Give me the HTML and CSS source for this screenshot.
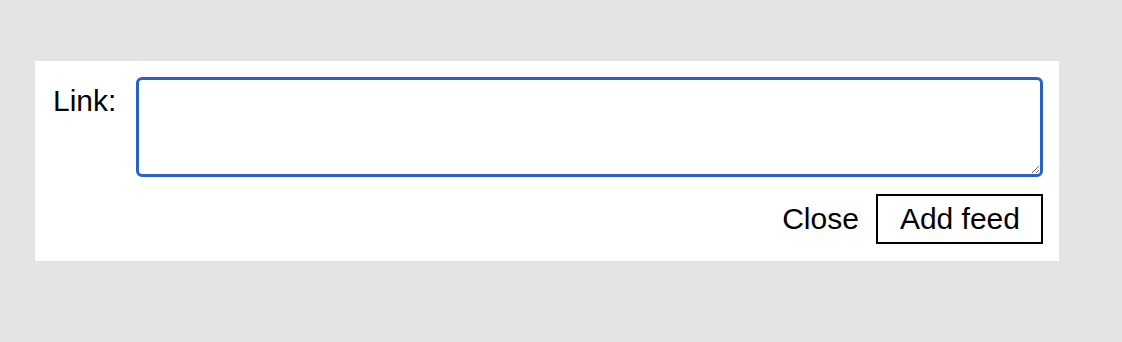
FILE: index.html
```html
<!DOCTYPE html>
<html lang="en">
<head>
    <meta charset="UTF-8">
    <title>Add feed</title>
    <link rel="stylesheet" href="styles.css">
</head>
<body>
    <div class="dialog">
        <div class="field">
            <label for="link">Link:</label>
            <textarea id="link" autofocus></textarea>
        </div>
        <div class="actions">
            <button class="close">Close</button>
            <button class="add">Add feed</button>
        </div>
    </div>
</body>
</html>
```

FILE: styles.css
```css
body {
    margin: 0;
    background: #e4e4e4;
    font-family: 'Liberation Sans', Arial, sans-serif;
    font-size: 30px;
    color: #000;
    padding: 61px 63px 0 35px;
}

.dialog {
    background: white;
    padding: 16px 16px 17px 18px;
}

.field {
    display: flex;
    align-items: flex-start;
    gap: 18px;
}

label {
    min-width: 65px;
    margin-top: 7px;
}

textarea {
    flex: 1;
    box-sizing: border-box;
    height: 100px;
    margin: 0;
    border: 3px solid #2a61c8;
    border-radius: 6px;
    outline: none;
    font-family: inherit;
    font-size: 20px;
    padding: 4px;
}

.actions {
    display: flex;
    justify-content: flex-end;
    align-items: center;
    gap: 17px;
    margin-top: 17px;
}

button {
    font-family: inherit;
    font-size: 30px;
    color: #000;
    background: white;
    margin: 0;
    cursor: pointer;
}

.close {
    border: none;
    padding: 0;
}

.add {
    border: 2px solid #000;
    border-radius: 0;
    height: 50px;
    padding: 0 21px 0 22px;
}
```
